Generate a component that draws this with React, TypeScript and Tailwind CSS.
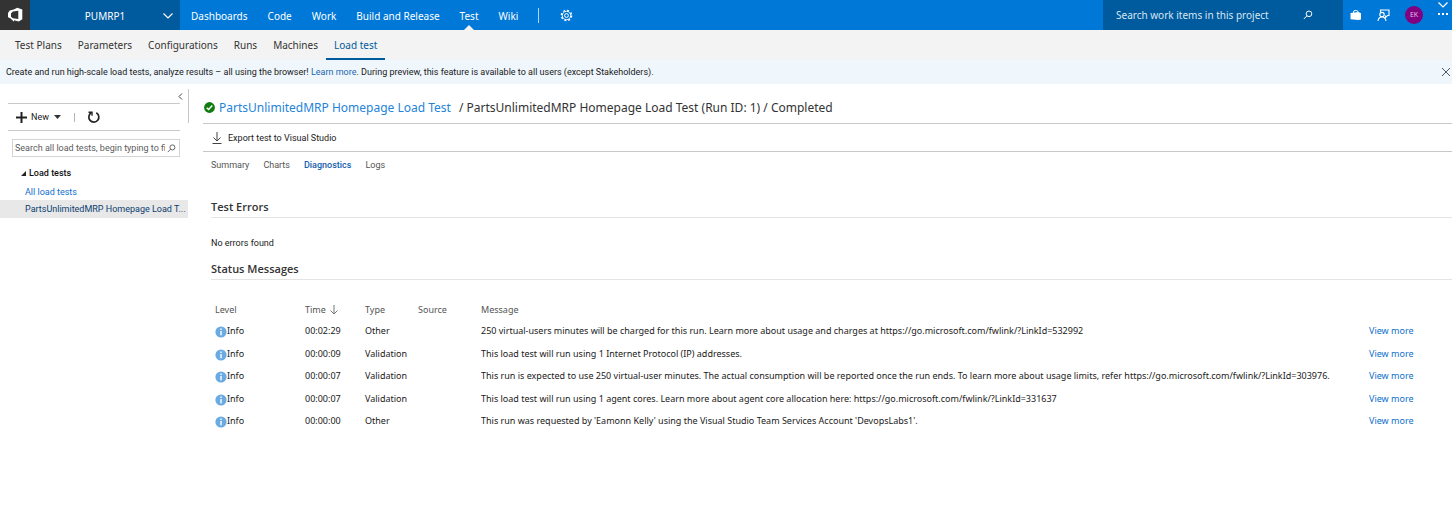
import React from "react";

const navLinks = ["Dashboards", "Code", "Work", "Build and Release", "Test", "Wiki"];
const hubTabs = ["Test Plans", "Parameters", "Configurations", "Runs", "Machines", "Load test"];
const runTabs = ["Summary", "Charts", "Diagnostics", "Logs"];

const messages = [
  { time: "00:02:29", type: "Other", text: "250 virtual-users minutes will be charged for this run. Learn more about usage and charges at https://go.microsoft.com/fwlink/?LinkId=532992" },
  { time: "00:00:09", type: "Validation", text: "This load test will run using 1 Internet Protocol (IP) addresses." },
  { time: "00:00:07", type: "Validation", text: "This run is expected to use 250 virtual-user minutes. The actual consumption will be reported once the run ends. To learn more about usage limits, refer https://go.microsoft.com/fwlink/?LinkId=303976." },
  { time: "00:00:07", type: "Validation", text: "This load test will run using 1 agent cores. Learn more about agent core allocation here: https://go.microsoft.com/fwlink/?LinkId=331637" },
  { time: "00:00:00", type: "Other", text: "This run was requested by 'Eamonn Kelly' using the Visual Studio Team Services Account 'DevopsLabs1'." },
];

function Chevron({ className }: { className?: string }) {
  return (
    <svg className={className} width="12" height="8" viewBox="0 0 12 8" fill="none" stroke="currentColor" strokeWidth="1.2" aria-hidden="true">
      <path d="M1.5 1.5 6 6l4.500-4.500" />
    </svg>
  );
}

function SearchIcon({ size, className }: { size: number; className?: string }) {
  return (
    <svg className={className} width={size} height={size} viewBox="0 0 10 10" fill="none" stroke="currentColor" strokeWidth="1" aria-hidden="true">
      <circle cx="6" cy="3.800" r="2.800" />
      <path d="M4 5.800 .8 9" />
    </svg>
  );
}

function TopBar() {
  return (
    <header className="flex h-[30px] items-stretch bg-[#0078d7] font-['Noto_Sans','Open_Sans',sans-serif] text-[10px] text-white">
      <a href="#home" aria-label="Home" className="flex w-[30px] items-center justify-center bg-[#333333]">
        <svg width="16" height="16" viewBox="0 0 16 16" fill="#fff" aria-hidden="true">
          <path fillRule="evenodd" d="M10.300.8 15.300 2.500v9.700l-3.500 2.300L7 13.200v1.600L3.300 11.300 1 10.300V5.900l1.700-2.500 4-.9zM11.300 3.700 5.800 4.500 4 6.600v3.200l1.800 1.500 5.500.8z" />
        </svg>
      </a>
      <button type="button" className="flex w-[150px] items-center bg-[#005a9e] pt-px pr-[6px] pl-[18px]">
        <span className="flex-1 text-center">PUMRP1</span>
        <Chevron />
      </button>
      <nav className="flex items-stretch pl-[11px]">
        <ul className="flex items-stretch gap-5">
          {navLinks.map((name) => (
            <li key={name} className="relative flex items-center pt-px">
              <a href={"#" + name.toLowerCase().replaceAll(" ", "-")}>{name}</a>
              {name === "Test" && (
                <svg className="absolute bottom-0 left-1/2 -translate-x-1/2" width="10" height="5" viewBox="0 0 10 5" fill="#f3f3f3" aria-hidden="true">
                  <path d="M0 5 5 0l5 5z" />
                </svg>
              )}
            </li>
          ))}
        </ul>
        <span className="ml-5 h-[15px] w-px self-center bg-white/70" />
        <button type="button" aria-label="Settings" className="ml-[21px]">
          <svg width="13" height="13" viewBox="0 0 13 13" fill="none" stroke="currentColor" aria-hidden="true">
            <circle cx="6.500" cy="6.500" r="5.100" strokeWidth="1.400" strokeDasharray="2 2.005" />
            <circle cx="6.500" cy="6.500" r="4.200" strokeWidth=".9" />
            <circle cx="6.500" cy="6.500" r="1.900" strokeWidth="1" />
          </svg>
        </button>
      </nav>
      <label className="ml-auto flex w-[240px] items-center bg-[#005a9e] pr-[30px] pl-[13px]">
        <input aria-label="Search work items" placeholder="Search work items in this project" className="min-w-0 flex-1 bg-transparent placeholder:text-[#d6e6f2] placeholder:opacity-100 focus:outline-none" />
        <SearchIcon size={10} />
      </label>
      <div className="flex items-center pl-[7px]">
        <button type="button" aria-label="Marketplace">
          <svg width="12" height="12" viewBox="0 0 12 12" aria-hidden="true">
            <path d="M.5 4 8.500 3v8L.5 10.300zM8.500 3l2.500 1.300v6.200L8.500 11z" fill="#fff" />
            <path d="M3.500 4V3Q3.500 1.500 5.200 1.500h1Q8 1.500 8 3v.5" fill="none" stroke="#fff" />
          </svg>
        </button>
        <button type="button" aria-label="Feedback" className="ml-[15px]">
          <svg width="13" height="13" viewBox="0 0 13 13" fill="none" stroke="currentColor" strokeWidth="1.100" aria-hidden="true">
            <path d="M3.500 3V1H12v5.500h-1.500L8.500 8.500V6.500" />
            <circle cx="5" cy="5.600" r="2.200" />
            <path d="M1 12Q1.500 8 5 8t4 4" />
          </svg>
        </button>
        <button type="button" aria-label="Account" className="ml-[15px] flex size-[18px] items-center justify-center rounded-full bg-[#80007f] text-[7px] text-[#e4bfe4]">
          EK
        </button>
        <button type="button" aria-label="More" className="ml-[12px] -mr-[2px] flex w-4 flex-col items-center self-start">
          <Chevron className="mt-px" />
          <svg width="12" height="6" viewBox="0 0 12 6" fill="currentColor" aria-hidden="true" className="mt-[3px]">
            <rect x="1" y="1" width="2" height="2" />
            <rect x="5" y="1" width="2" height="2" />
            <rect x="9" y="1" width="2" height="2" />
          </svg>
        </button>
        <span className="w-[3px]" />
      </div>
    </header>
  );
}

function Sidebar() {
  return (
    <aside className="w-[188px] shrink-0 font-['Roboto','Open_Sans',sans-serif]">
      <div className="flex h-[19px] items-center justify-end pt-[5px] pr-1">
        <button type="button" aria-label="Collapse" className="px-px">
          <svg width="5" height="7" viewBox="0 0 5 7" fill="none" stroke="#444" aria-hidden="true">
            <path d="M4 .5 1 3.500l3 3" />
          </svg>
        </button>
      </div>
      <div className="mr-2 ml-2 flex h-7 items-center border-y border-[#c8c8c8] pl-2">
        <button type="button" className="flex items-center">
          <svg width="11" height="11" viewBox="0 0 11 11" stroke="#222" strokeWidth="2" aria-hidden="true">
            <path d="M5.500 0v11M0 5.500h11" />
          </svg>
          <span className="ml-1">New</span>
          <svg className="ml-[5px]" width="7" height="4" viewBox="0 0 7 4" fill="#333" aria-hidden="true">
            <path d="M0 0h7L3.500 4z" />
          </svg>
        </button>
        <span className="ml-[13px] h-[9px] w-px bg-[#b5b5b5]" />
        <button type="button" aria-label="Refresh" className="ml-3">
          <svg width="14" height="14" viewBox="0 0 14 14" fill="none" stroke="#222" strokeWidth="1.700" aria-hidden="true">
            <path d="M9.300 2.700A5 5 0 1 1 4.200 2.800" />
            <path d="M1.500 2.200h3.500v3.600" strokeWidth="1.400" />
          </svg>
        </button>
      </div>
      <label className="mt-2 mr-2 ml-3 flex h-[18px] items-center border border-[#d4d4d4] pr-[3px] pl-[2px]">
        <input aria-label="Search load tests" placeholder="Search all load tests, begin typing to find" className="min-w-0 flex-1 bg-transparent placeholder:text-[#5c5c5c] placeholder:opacity-100 focus:outline-none" />
        <SearchIcon size={9} className="ml-[2px] text-[#555]" />
      </label>
      <button type="button" className="mt-[7px] ml-[21px] flex h-[18px] items-center gap-[3px]">
        <svg width="5" height="5" viewBox="0 0 5 5" fill="#222" aria-hidden="true">
          <path d="M5 0v5H0z" />
        </svg>
        <span className="font-medium text-[#111]">Load tests</span>
      </button>
      <a href="#all" className="flex h-[18px] items-center pt-px pl-[25px] text-[#0f6fd0]">All load tests</a>
      <a href="#run" className="block h-[18px] bg-[#e8e8e8] pl-[25px] leading-[19px] whitespace-nowrap text-[#0b3e70]">PartsUnlimitedMRP Homepage Load T...</a>
    </aside>
  );
}

function Heading({ children }: { children: React.ReactNode }) {
  return <h2 className="h-[22px] border-b border-[#e4e4e4] text-[11px] leading-[21px] font-semibold text-[#333]">{children}</h2>;
}

function RunDetails() {
  return (
    <main className="min-w-0 flex-1">
      <div className="flex pt-[5px]">
        <div className="h-[34px] w-[15px] shrink-0 border-l border-[#c8c8c8]" />
        <h1 className="flex h-[35px] min-w-0 flex-1 items-center border-b border-[#c8c8c8] pt-[3px] pl-px font-['Noto_Sans','Open_Sans',sans-serif] text-[12px] whitespace-nowrap text-[#333]">
          <svg width="11" height="11" viewBox="0 0 11 11" aria-hidden="true">
            <circle cx="5.500" cy="5.500" r="5.400" fill="#107c10" />
            <path d="M2.700 5.800 4.600 7.500 8.300 3.500" fill="none" stroke="#fff" strokeWidth="1.500" />
          </svg>
          <a href="#test" className="ml-1 text-[#2484d8]">PartsUnlimitedMRP Homepage Load Test</a>
          <span className="ml-2">/ PartsUnlimitedMRP Homepage Load Test (Run ID: 1) / Completed</span>
        </h1>
      </div>
      <div className="ml-[15px] flex h-7 items-center border-b border-[#c8c8c8] pl-[9px] font-['Roboto','Open_Sans',sans-serif]">
        <button type="button" className="flex items-center gap-[6px]">
          <svg width="10" height="12" viewBox="0 0 10 12" fill="none" stroke="#444" aria-hidden="true">
            <path d="M5 0v9M1.500 5.500 5 9l3.500-3.500M.5 11.500h9" />
          </svg>
          Export test to Visual Studio
        </button>
      </div>
      <div className="pl-[23px]">
        <nav className="flex h-[26px] items-center gap-[14px] font-['Roboto','Open_Sans',sans-serif] text-[#555]">
          {runTabs.map((name) => (
            <a key={name} href={"#" + name.toLowerCase()} className={name === "Diagnostics" ? "font-medium text-[#1560ad]" : ""}>{name}</a>
          ))}
        </nav>
        <div className="mt-[18px]">
          <Heading>Test Errors</Heading>
        </div>
        <p className="mt-[18px] mb-2 leading-[14px] font-['Roboto','Open_Sans',sans-serif]">No errors found</p>
        <Heading>Status Messages</Heading>
        <table className="mt-5 w-full table-fixed border-collapse text-left font-['Noto_Sans','Open_Sans',sans-serif] whitespace-nowrap">
          <colgroup>
            <col className="w-[90px]" />
            <col className="w-[60px]" />
            <col className="w-[53px]" />
            <col className="w-[63px]" />
            <col />
            <col className="w-[87px]" />
          </colgroup>
          <thead className="text-[#555]">
            <tr className="h-5">
              <th className="pl-1 font-normal">Level</th>
              <th className="pl-1 font-normal">
                <span className="flex items-center gap-1">
                  Time
                  <svg width="8" height="10" viewBox="0 0 8 10" fill="none" stroke="#777" aria-hidden="true">
                    <path d="M4 0v9M.5 5.500 4 9l3.500-3.500" />
                  </svg>
                </span>
              </th>
              <th className="pl-1 font-normal">Type</th>
              <th className="pl-1 font-normal">Source</th>
              <th className="pl-1 font-normal">Message</th>
              <th className="pl-1 font-normal" aria-label="Actions"></th>
            </tr>
          </thead>
          <tbody>
            {messages.map((m, i) => (
              <tr key={i} className="odd:h-[22px] even:h-[23px]">
                <td className="pl-1">
                  <span className="flex items-center">
                    <svg className="mt-[2px]" width="12" height="12" viewBox="0 0 12 12" aria-hidden="true">
                      <circle cx="6" cy="6" r="5.600" fill="#6aabe3" />
                      <path d="M6 2.500v1.400M6 5v4.200" stroke="#fff" strokeWidth="1.400" />
                    </svg>
                    Info
                  </span>
                </td>
                <td className="pl-1">{m.time}</td>
                <td className="pl-1">{m.type}</td>
                <td></td>
                <td className="pl-1">{m.text}</td>
                <td className="pl-1"><a href="#details" className="text-[#0f70cc]">View more</a></td>
              </tr>
            ))}
          </tbody>
        </table>
      </div>
    </main>
  );
}

export default function App() {
  return (
    <div className="min-h-screen bg-white font-['Open_Sans','Noto_Sans',sans-serif] text-[9px] leading-[14px] text-[#1a1a1a]">
      <TopBar />
      <nav className="flex h-[30px] items-stretch bg-[#f3f3f3] pl-[7px] font-['Noto_Sans','Open_Sans',sans-serif] text-[10px] text-[#333]">
        {hubTabs.map((name) => (
          <a
            key={name}
            href={"#" + name.toLowerCase().replaceAll(" ", "-")}
            className={name === "Load test" ? "flex items-center border-b-2 border-[#005a9e] px-2 pt-[2px] text-[#005a9e]" : "flex items-center px-2"}
          >
            {name}
          </a>
        ))}
      </nav>
      <div className="flex h-6 items-center justify-between bg-[#eff6fc] pr-px pl-[6px] font-['Roboto','Open_Sans',sans-serif]">
        <p>
          Create and run high-scale load tests, analyze results – all using the browser!{" "}
          <a href="#learn" className="text-[#1a68b0]">Learn more</a>. During preview, this feature is available to all users (except Stakeholders).
        </p>
        <button type="button" aria-label="Dismiss">
          <svg width="10" height="10" viewBox="0 0 10 10" stroke="#555" aria-hidden="true">
            <path d="M1 1l8 8M9 1 1 9" />
          </svg>
        </button>
      </div>
      <div className="flex">
        <Sidebar />
        <RunDetails />
      </div>
    </div>
  );
}
